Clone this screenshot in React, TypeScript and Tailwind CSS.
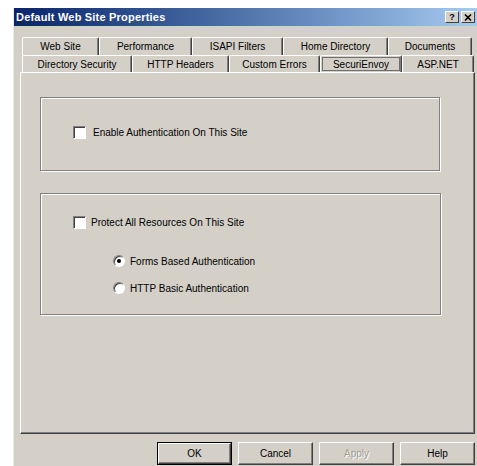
import React from 'react';

const font = { fontFamily: '"Liberation Sans", Arial, sans-serif' };

type Tab = { label: string; w: number };

const rowBack: Tab[] = [
  { label: 'Web Site', w: 77 },
  { label: 'Performance', w: 93 },
  { label: 'ISAPI Filters', w: 91 },
  { label: 'Home Directory', w: 105 },
  { label: 'Documents', w: 84 },
];

const rowFront: Tab[] = [
  { label: 'Directory Security', w: 110 },
  { label: 'HTTP Headers', w: 97 },
  { label: 'Custom Errors', w: 91 },
  { label: 'SecuriEnvoy', w: 82 },
  { label: 'ASP.NET', w: 72 },
];

const TabButton: React.FC<{ tab: Tab; active?: boolean }> = ({ tab, active }) => (
  <div
    style={{ width: tab.w }}
    className="h-full shrink-0 flex items-center justify-center border-t border-l border-r border-t-white border-l-white border-r-[#404040] shadow-[inset_-1px_0_#808080] rounded-t-[2px] text-[10px] text-black"
  >
    {active ? (
      <span className="w-full h-[14px] mx-[1px] flex items-center justify-center border border-[#6e6e6e]">{tab.label}</span>
    ) : (
      tab.label
    )}
  </div>
);

const CheckBox: React.FC = () => (
  <span className="w-[13px] h-[13px] shrink-0 bg-white border-t border-l border-b border-r border-t-[#808080] border-l-[#808080] border-b-white border-r-white shadow-[inset_1px_1px_#404040]" />
);

const Radio: React.FC<{ checked?: boolean }> = ({ checked }) => (
  <span className="w-[12px] h-[12px] shrink-0 rounded-full bg-white border border-t-[#808080] border-l-[#808080] border-b-white border-r-white shadow-[inset_1px_1px_#404040] flex items-center justify-center">
    {checked && <span className="w-[4px] h-[4px] rounded-full bg-black" />}
  </span>
);

const DialogButton: React.FC<{ label: string; primary?: boolean; disabled?: boolean }> = ({ label, primary, disabled }) => (
  <div
    className={`w-[75px] h-[23px] flex items-center justify-center text-[10px] ${
      primary ? 'border border-black' : ''
    }`}
  >
    <div className="w-full h-full flex items-center justify-center border-t border-l border-b border-r border-t-white border-l-white border-b-[#404040] border-r-[#404040] shadow-[inset_-1px_-1px_#808080]">
      {disabled ? (
        <span className="text-[#a09d96] [text-shadow:1px_1px_#ffffff]">Apply</span>
      ) : (
        <span className="text-black">{label}</span>
      )}
    </div>
  </div>
);

export default function App() {
  return (
    <div style={font} className="w-[477px] h-[466px] bg-white overflow-hidden pt-[8px] pl-[13px]">
      <div className="w-[464px] h-[470px] bg-[#d4d0c8] border-l border-l-[#ebe9e4]">
        {/* caption */}
        <div className="h-[18px] flex items-center bg-gradient-to-r from-[#0a246a] to-[#a6caf0] pl-[2px] pr-[2px]">
          <span className="text-[11px] font-bold text-white tracking-[0.2px]">Default Web Site Properties</span>
          <div className="ml-auto flex gap-[2px]">
            <div className="w-[14px] h-[12px] bg-[#d4d0c8] border-t border-l border-b border-r border-t-white border-l-white border-b-[#404040] border-r-[#404040] flex items-center justify-center text-[9px] font-bold leading-none text-black">
              ?
            </div>
            <div className="w-[14px] h-[12px] bg-[#d4d0c8] border-t border-l border-b border-r border-t-white border-l-white border-b-[#404040] border-r-[#404040] flex items-center justify-center">
              <svg width="8" height="7" viewBox="0 0 8 7">
                <path d="M1 0.5 L7 6.5 M7 0.5 L1 6.5" stroke="#000" strokeWidth="1.6" />
              </svg>
            </div>
          </div>
        </div>

        <div className="pt-[11px] pl-[6px]">
          {/* tab strip */}
          <div className="h-[18px] flex pl-[2px]">
            {rowBack.map(t => (
              <TabButton key={t.label} tab={t} />
            ))}
          </div>
          <div className="h-[17px] flex pl-[2px]">
            {rowFront.map(t => (
              <TabButton key={t.label} tab={t} active={t.label === 'SecuriEnvoy'} />
            ))}
          </div>

          {/* page */}
          <div className="w-[455px] h-[362px] border-t border-l border-b border-r border-t-white border-l-white border-b-[#404040] border-r-[#404040] shadow-[inset_-1px_-1px_#808080] pl-[19px] pt-[24px]">
            <div className="w-[400px] h-[74px] border border-[#808080] shadow-[inset_1px_1px_#ffffff,1px_1px_#ffffff] pl-[32px] pt-[28px]">
              <div className="h-[13px] flex items-center gap-[7px] text-[10px] text-black">
                <CheckBox />
                <span>Enable Authentication On This Site</span>
              </div>
            </div>

            <div className="mt-[22px] w-[401px] h-[122px] border border-[#808080] shadow-[inset_1px_1px_#ffffff,1px_1px_#ffffff] pl-[32px] pt-[22px] text-[10px] text-black">
              <div className="h-[13px] flex items-center gap-[5px]">
                <CheckBox />
                <span>Protect All Resources On This Site</span>
              </div>
              <div className="pl-[40px] pt-[26px] flex flex-col gap-[15px]">
                <div className="h-[12px] flex items-center gap-[5px]">
                  <Radio checked />
                  <span>Forms Based Authentication</span>
                </div>
                <div className="h-[12px] flex items-center gap-[5px]">
                  <Radio />
                  <span>HTTP Basic Authentication</span>
                </div>
              </div>
            </div>
          </div>

          {/* dialog buttons */}
          <div className="mt-[8px] w-[455px] flex justify-end gap-[6px]">
            <DialogButton label="OK" primary />
            <DialogButton label="Cancel" />
            <DialogButton label="Apply" disabled />
            <DialogButton label="Help" />
          </div>
        </div>
      </div>
    </div>
  );
}
